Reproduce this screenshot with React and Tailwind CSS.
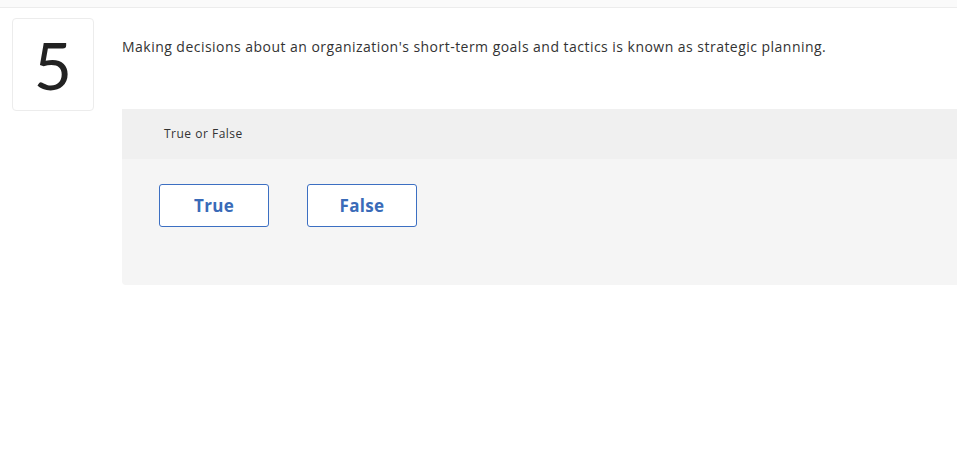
export default function App() {
  return (
    <div className="min-h-screen w-[957px] bg-white overflow-hidden" style={{ fontFamily: '"Open Sans", sans-serif' }}>
      <div className="h-[8px] bg-[#fafafa] border-b border-[#ececec]" />
      <div className="flex pt-[10px]">
        <div className="ml-[12px] w-[82px] h-[93px] shrink-0 border border-[#ececec] rounded-[4px] flex items-center justify-center">
          <span className="text-[66px] leading-none text-[#222] font-normal" style={{ fontFamily: '"Lato", sans-serif' }}>5</span>
        </div>
        <div className="ml-[28px] flex-1">
          <p className="mt-[19px] text-[14px] leading-[20px] tracking-[0.47px] text-[#333]">
            Making decisions about an organization's short-term goals and tactics is known as strategic planning.
          </p>
          <div className="mt-[52px] rounded-bl-[4px] overflow-hidden">
            <div className="h-[50px] bg-[#f0f0f0] flex items-center pl-[42px] text-[12px] tracking-[0.5px] text-[#333]">True or False</div>
            <div className="h-[126px] bg-[#f5f5f5] pt-[25px] pl-[37px] flex gap-[38px] items-start">
              <button className="w-[110px] h-[43px] bg-white border border-[#3c6fc2] rounded-[3px] text-[17px] font-bold tracking-[0.3px] text-[#3a6bb8]">True</button>
              <button className="w-[110px] h-[43px] bg-white border border-[#3c6fc2] rounded-[3px] text-[17px] font-bold tracking-[0.3px] text-[#3a6bb8]">False</button>
            </div>
          </div>
        </div>
      </div>
    </div>
  );
}
